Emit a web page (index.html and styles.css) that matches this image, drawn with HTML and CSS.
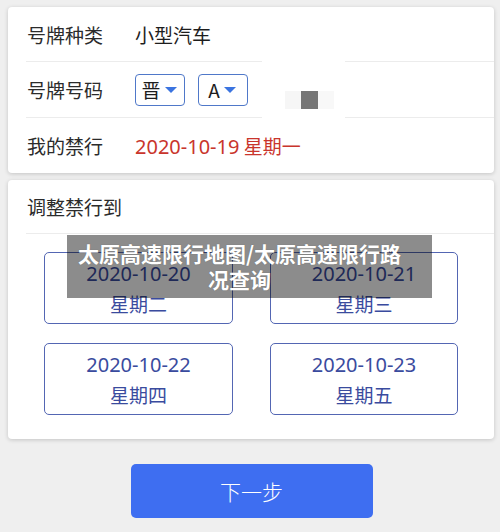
FILE: index.html
```html
<!DOCTYPE html>
<html lang="zh-CN">

<head>
	<meta charset="UTF-8">
	<title>太原高速限行地图/太原高速限行路况查询</title>
	<link rel="stylesheet" href="styles.css">
</head>

<body>
	<div class="page">
		<div class="card info">
			<div class="row">
				<span class="label">号牌种类</span>
				<span class="value">小型汽车</span>
			</div>
			<div class="row">
				<span class="label">号牌号码</span>
				<div class="picker">晋<i class="caret"></i></div>
				<div class="picker">A<i class="caret"></i></div>
			</div>
			<div class="row">
				<span class="label">我的禁行</span>
				<span class="value red"><span class="num">2020-10-19</span> 星期一</span>
			</div>
			<!-- 号码输入框被遮住的部分 -->
			<div class="mask"><b class="mask_dot"></b></div>
		</div>

		<div class="card adjust">
			<div class="title">调整禁行到</div>
			<div class="days">
				<div class="day"><span class="num">2020-10-20</span><span>星期二</span></div>
				<div class="day"><span class="num">2020-10-21</span><span>星期三</span></div>
				<div class="day"><span class="num">2020-10-22</span><span>星期四</span></div>
				<div class="day"><span class="num">2020-10-23</span><span>星期五</span></div>
			</div>
			<div class="banner">太原高速限行地图/太原高速限行路况查询</div>
		</div>

		<div class="footer">
			<input type="button" class="next" value="下一步">
		</div>
	</div>
</body>

</html>
```

FILE: styles.css
```css
* {
	margin: 0;
	padding: 0;
	box-sizing: border-box;
}

body {
	background: #efefef;
	font-family: "Noto Sans CJK SC", "Noto Sans", sans-serif;
	color: #222;
}

.page {
	width: 500px;
	height: 532px;
	padding-top: 7px;
	overflow: hidden;
}

.card {
	margin: 0 6px 7px 8px;
	background: #fff;
	border-radius: 4px;
	box-shadow: 0 1px 4px rgba(0, 0, 0, 0.18);
	position: relative;
}

.num {
	font-family: "Noto Sans", sans-serif;
	font-size: 20px;
}

/* 车辆信息 */
.info .row {
	display: flex;
	align-items: center;
	height: 54px;
	margin-left: 18px;
	padding-left: 1px;
	font-size: 19px;
}

.info .row+.row {
	border-top: 1px solid #ececec;
	height: 56px;
}

.info .row:last-of-type {
	height: 55px;
}

.label {
	width: 108px;
	color: #2b2b2b;
}

.value {
	color: #1d1d1d;
}

.value.red {
	color: #c9352c;
}

.picker {
	width: 50px;
	height: 32px;
	margin-right: 13px;
	border: 1px solid #4f78c9;
	border-radius: 4px;
	display: flex;
	align-items: center;
	justify-content: center;
	font-size: 19px;
	color: #1d1d1d;
	padding-right: 2px;
}

.caret {
	width: 0;
	height: 0;
	margin-left: 4px;
	border-left: 6px solid transparent;
	border-right: 6px solid transparent;
	border-top: 6px solid #3b74e0;
}

.mask {
	position: absolute;
	left: 254px;
	top: 53px;
	width: 83px;
	height: 59px;
	background: #fff;
}

.mask_dot {
	position: absolute;
	left: 39px;
	top: 31px;
	width: 17px;
	height: 18px;
	background: #767676;
	box-shadow: -16px 0 0 #f6f6f6, 16px 0 0 #f8f8f8;
}

/* 调整日期 */
.adjust {
	padding-bottom: 24px;
}

.adjust .title {
	height: 54px;
	line-height: 54px;
	margin-left: 18px;
	padding-left: 1px;
	font-size: 19px;
	color: #2b2b2b;
	border-bottom: 1px solid #ececec;
}

.days {
	display: grid;
	grid-template-columns: 189px 188px;
	column-gap: 37px;
	row-gap: 19px;
	padding: 18px 36px 0 36px;
}

.day {
	height: 72px;
	padding-top: 6px;
	border: 1px solid #5366b3;
	border-radius: 5px;
	display: flex;
	flex-direction: column;
	align-items: center;
	color: #3a4b9e;
	font-size: 19px;
	line-height: 30px;
}

.banner {
	position: absolute;
	left: 59px;
	top: 55px;
	width: 365px;
	height: 63px;
	padding: 5px 28px 0 8px;
	background: rgba(0, 0, 0, 0.45);
	color: #fff;
	font-size: 21px;
	font-weight: bold;
	line-height: 26px;
	text-align: center;
	text-shadow: 0 0 1px rgba(0, 0, 0, 0.3);
}

/* 底部按钮 */
.footer {
	display: flex;
	justify-content: center;
	padding-top: 18px;
	padding-left: 3px;
}

.next {
	width: 242px;
	height: 54px;
	border: 0;
	border-radius: 5px;
	background: #3e6ef1;
	color: #fff;
	font-family: "Noto Sans CJK SC", sans-serif;
	font-size: 21px;
	font-weight: 300;
}
```
